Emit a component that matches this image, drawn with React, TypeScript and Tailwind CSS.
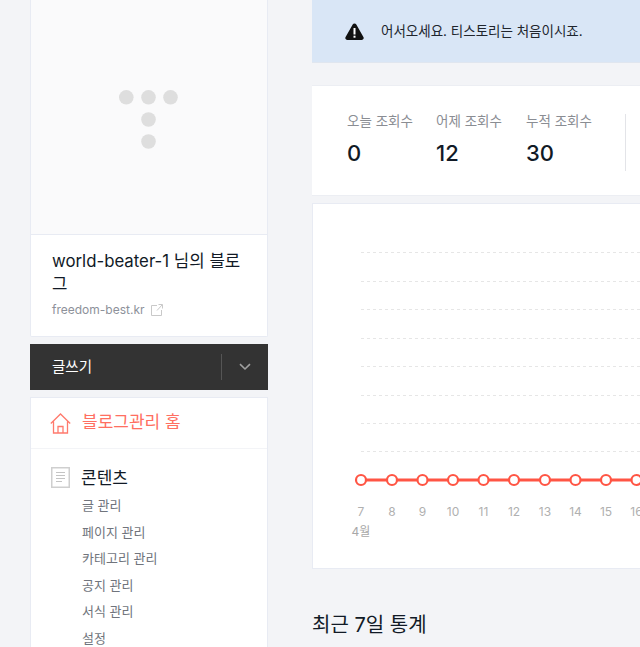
const fontStack = { fontFamily: 'Inter, "Noto Sans CJK KR", sans-serif' };

const subItems = ["글 관리", "페이지 관리", "카테고리 관리", "공지 관리", "서식 관리", "설정"];
const stats = [
  { label: "오늘 조회수", value: "0", cls: "w-[89px]" },
  { label: "어제 조회수", value: "12", cls: "w-[90px]" },
  { label: "누적 조회수", value: "30", cls: "w-[99px]" },
];
const gridYs = [48, 77, 105, 134, 162, 191, 219, 247];
const xs = [48, 79, 109.5, 140, 170.5, 201, 232, 262.5, 293, 323.5];
const days = ["7", "8", "9", "10", "11", "12", "13", "14", "15", "16"];

function TLogo() {
  return (
    <svg width="60" height="60" viewBox="0 0 60 60" fill="#dedede">
      <circle cx="7.300" cy="7.300" r="7.300" />
      <circle cx="29.500" cy="7.300" r="7.300" />
      <circle cx="51.500" cy="7.300" r="7.300" />
      <circle cx="29.500" cy="29.500" r="7.300" />
      <circle cx="29.500" cy="51.500" r="7.300" />
    </svg>
  );
}

function App() {
  return (
    <div style={fontStack} className="w-[640px] h-[647px] overflow-hidden bg-[#f3f4f7] flex pl-[30px] gap-[44px]">
      <aside className="w-[238px] shrink-0 flex flex-col">
        <div className="h-[337px] shrink-0 bg-white border-x border-b border-[#e8ebf3] rounded-b-[2px]">
          <div className="h-[235px] bg-[#fafafb] border-b border-[#e8ebf3] flex items-center justify-center">
            <div className="mt-[6px]"><TLogo /></div>
          </div>
          <div className="pl-[21px] pr-[20px] pt-[15px]">
            <p className="text-[16.800px] leading-[23px] text-[#111a26]">world-beater-1 님의 블로그</p>
            <div className="mt-[5px] flex items-center gap-[6px] text-[12px] leading-[18px] text-[#8d919a]">
              freedom-best.kr
              <svg width="12" height="12" viewBox="0 0 12 12" fill="none" stroke="#c9c9c9" strokeWidth="1">
                <path d="M6 1.500H.5v10h10V6M6 6.500 11 1M7.500.5h4v4" />
              </svg>
            </div>
          </div>
        </div>
        <div className="mt-[7px] h-[46px] shrink-0 bg-[#333333] flex items-center pl-[22px] text-white">
          <span className="text-[14.500px] flex-1">글쓰기</span>
          <span className="w-px h-[26px] bg-[#555555]" />
          <span className="w-[46px] flex justify-center">
            <svg width="12" height="8" viewBox="0 0 12 8" fill="none" stroke="#a0a0a0" strokeWidth="1.600">
              <path d="M1 1.200 6 6l5-4.800" />
            </svg>
          </span>
        </div>
        <div className="mt-[7px] flex-1 bg-white border-x border-t border-[#e8ebf3]">
          <div className="h-[51px] border-b border-[#f3f4f7] flex items-center pl-[19px] gap-[11px] text-[#ff6f61]">
            <svg width="21" height="21" viewBox="0 0 21 21" fill="none" stroke="#ff7a6d" strokeWidth="1.300">
              <path d="M.8 10.500 10.500 1l9.700 9.500M3.500 8.500V20h14V8.500M8 20v-6.500h5V20" />
            </svg>
            <span className="text-[17px]">블로그관리 홈</span>
          </div>
          <div className="pl-[20px] pt-[17px] flex">
            <svg width="19" height="21" viewBox="0 0 19 21" fill="none" stroke="#cfcfcf" className="shrink-0 mt-[1px]">
              <rect x=".75" y=".75" width="17.500" height="19.500" strokeWidth="1.500" />
              <path d="M5 5.500h9M5 8.500h9M5 11.500h9M5 14.500h6" stroke="#c4c4c4" />
            </svg>
            <div className="ml-[11px]">
              <p className="text-[17px] leading-[24px] text-[#111a26]">콘텐츠</p>
              <ul className="mt-[2px] ml-[1px] text-[13px] text-[#70747c]">
                {subItems.map((s) => (
                  <li key={s} className="h-[26.500px] leading-[26px] whitespace-nowrap">{s}</li>
                ))}
              </ul>
            </div>
          </div>
        </div>
      </aside>

      <main className="w-[328px] shrink-0 flex flex-col">
        <div className="h-[63px] shrink-0 bg-[#d9e6f6] border-b border-[#e0e6ef] flex items-center pl-[33px]">
          <svg width="19" height="17" viewBox="0 0 19 17" className="shrink-0">
            <path d="M9.500.5c.8 0 1.400.4 1.800 1.100l7.100 12.400c.8 1.400-.1 2.900-1.800 2.900H2.400C.7 16.900-.2 15.400.6 14L7.700 1.600C8.100.9 8.700.5 9.500.5z" fill="#111" />
            <rect x="8.500" y="5" width="2" height="6.500" fill="#fff" />
            <rect x="8.500" y="12.700" width="2" height="2" fill="#fff" />
          </svg>
          <span className="ml-[17px] text-[13.500px] text-[#20252d] whitespace-nowrap">어서오세요. 티스토리는 처음이시죠.</span>
        </div>
        <div className="mt-[22px] h-[111px] shrink-0 bg-white border-y border-[#eceef3] flex pl-[35px] pt-[25px]">
          {stats.map((s) => (
            <div key={s.label} className={`${s.cls} shrink-0`}>
              <p className="text-[13.500px] leading-[20px] text-[#8a8d93] whitespace-nowrap">{s.label}</p>
              <p className="mt-[7px] text-[22px] leading-[30px] font-[450] text-[#111a26]">{s.value}</p>
            </div>
          ))}
          <span className="w-px h-[57px] mt-[3px] bg-[#e3e4e8]" />
        </div>
        <div className="mt-[7px] h-[366px] shrink-0 bg-white border border-r-0 border-[#e8ebf3] overflow-hidden">
          <svg width="328" height="364" viewBox="0 0 328 364">
            {gridYs.map((y) => (
              <line key={y} x1="48" x2="328" y1={y + 0.5} y2={y + 0.5} stroke="#e6e6e6" strokeDasharray="3 3" />
            ))}
            <line x1="48" x2="328" y1="276" y2="276" stroke="#ff5544" strokeWidth="3" />
            {xs.map((x) => (
              <circle key={x} cx={x} cy="276" r="5" fill="#fff" stroke="#ff5544" strokeWidth="2.200" />
            ))}
            {xs.map((x, i) => (
              <text key={days[i]} x={x} y="312" textAnchor="middle" fontSize="12" fill="#b0b0b0">{days[i]}</text>
            ))}
            <text x="48" y="332" textAnchor="middle" fontSize="12" fill="#a8a8a8">4월</text>
          </svg>
        </div>
        <h2 className="mt-[41px] text-[20px] leading-[30px] text-[#111a26] whitespace-nowrap">최근 7일 통계</h2>
      </main>
    </div>
  );
}

export default App;
